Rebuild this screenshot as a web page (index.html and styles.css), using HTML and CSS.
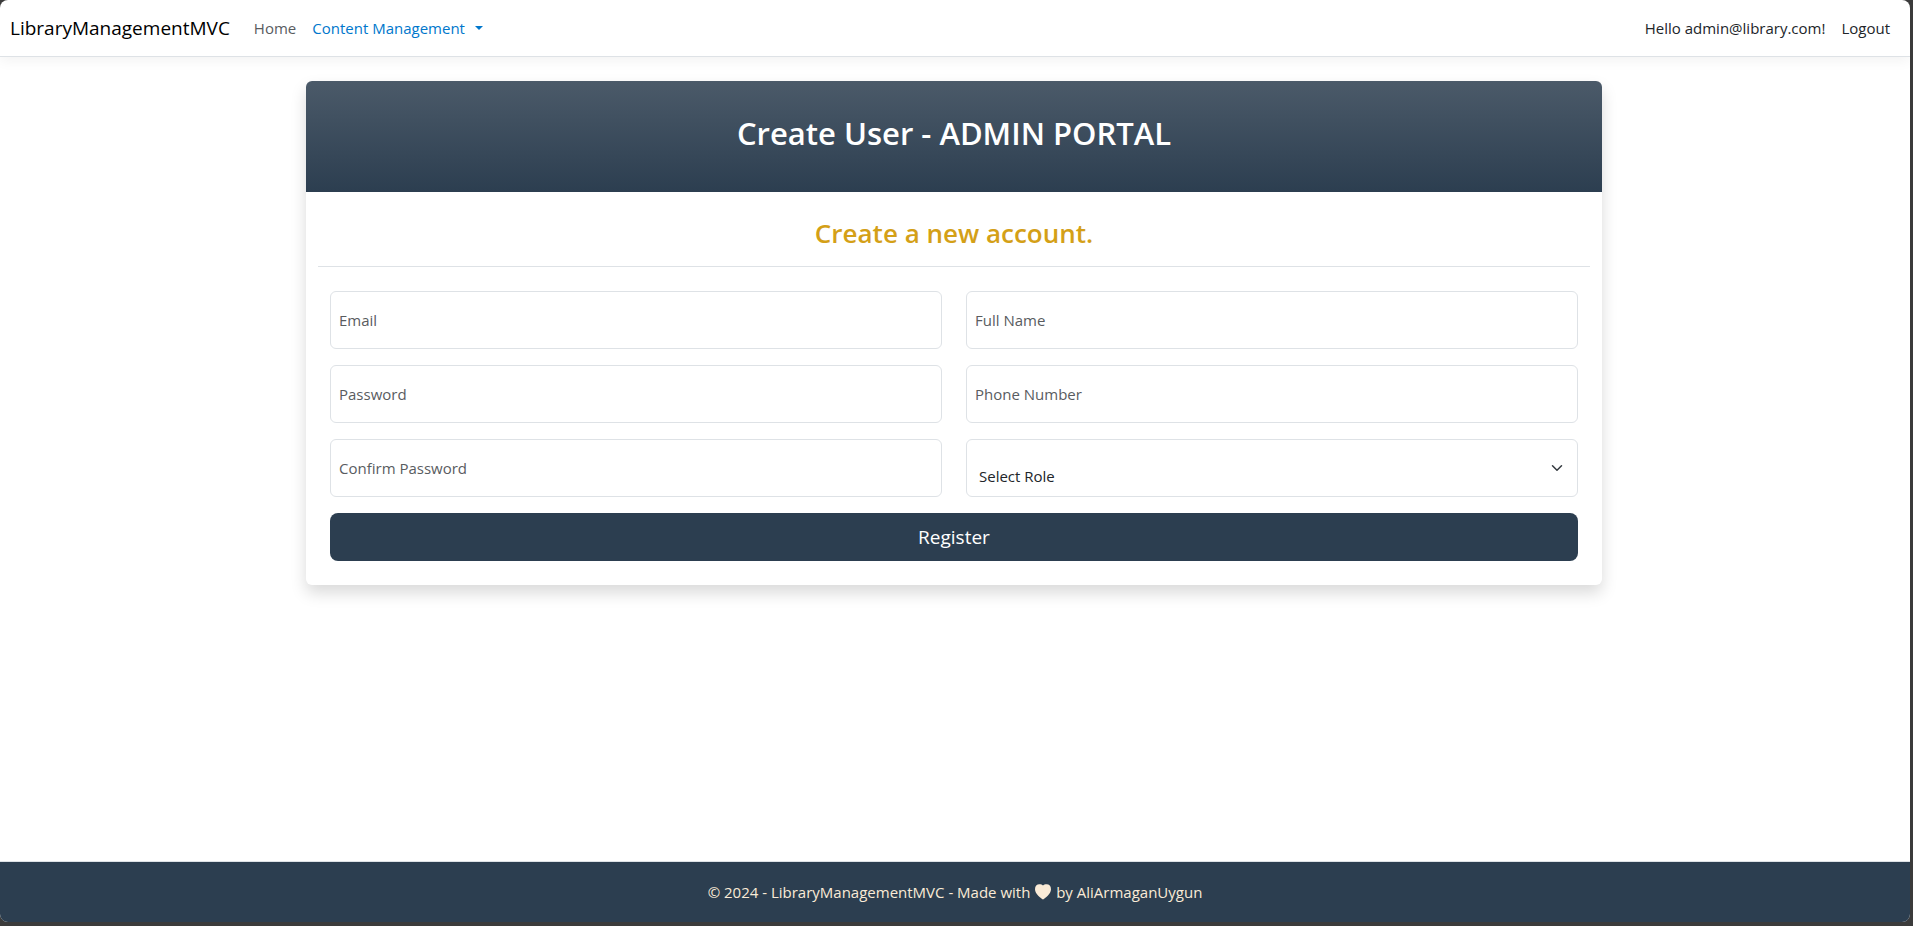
FILE: index.html
```html
<!DOCTYPE html>
<html lang="en">
<head>
<meta charset="utf-8">
<title>Create User - LibraryManagementMVC</title>
<link rel="stylesheet" href="styles.css">
</head>
<body>
<div class="page">
  <header class="navbar">
    <a class="brand" href="#">LibraryManagementMVC</a>
    <nav class="nav">
      <a class="nav-link muted" href="#">Home</a>
      <button class="nav-link dropdown" type="button">Content Management<span class="caret"></span></button>
    </nav>
    <nav class="nav nav-end">
      <a class="nav-link" href="#">Hello admin@library.com!</a>
      <button class="nav-link" type="button">Logout</button>
    </nav>
  </header>

  <main class="main">
    <section class="card">
      <div class="card-header">
        <h1 class="title">Create User - ADMIN PORTAL</h1>
      </div>
      <div class="card-body">
        <h2 class="subtitle">Create a new account.</h2>
        <form class="form">
          <div class="field">
            <input class="control" id="email" type="email">
            <label class="label" for="email">Email</label>
          </div>
          <div class="field">
            <input class="control" id="name" type="text">
            <label class="label" for="name">Full Name</label>
          </div>
          <div class="field">
            <input class="control" id="password" type="password">
            <label class="label" for="password">Password</label>
          </div>
          <div class="field">
            <input class="control" id="phone" type="tel">
            <label class="label" for="phone">Phone Number</label>
          </div>
          <div class="field">
            <input class="control" id="confirm" type="password">
            <label class="label" for="confirm">Confirm Password</label>
          </div>
          <div class="field">
            <select class="control select" id="role" aria-label="Role">
              <option>Select Role</option>
            </select>
            <svg class="chevron" viewBox="0 0 16 16" width="16" height="16" aria-hidden="true"><path d="m2 5 6 6 6-6" fill="none" stroke="#343a40" stroke-width="2" stroke-linecap="round" stroke-linejoin="round"/></svg>
          </div>
          <button class="submit" type="submit">Register</button>
        </form>
      </div>
    </section>
  </main>

  <footer class="footer">
    <p class="footer-text">© 2024 - LibraryManagementMVC - Made with <svg class="heart" viewBox="0 0 16 16" width="16" height="16" role="img" aria-label="love"><path d="M8 15.600C6 14.200 0 10 0 5.200C0 2 1.800 0.200 4.400 0.200C6 0.200 7.300 0.500 8 1.400C8.700 0.500 10 0.200 11.600 0.200C14.200 0.200 16 2 16 5.200C16 10 10 14.200 8 15.600Z" fill="currentColor"/></svg> by AliArmaganUygun</p>
  </footer>
</div>
</body>
</html>
```
FILE: styles.css
```css
* {
  box-sizing: border-box;
}

body {
  margin: 0;
  background: #3b3b3b;
  color: #212529;
  font: 400 15px/24px "Open Sans", "Noto Sans", sans-serif;
}

button,
input,
select {
  font: inherit;
  color: inherit;
}

.page {
  display: flex;
  flex-direction: column;
  min-height: calc(100vh - 4px);
  margin: 0 3px 4px 0;
  overflow: hidden;
  background: #fff;
  border-radius: 8px;
}

.navbar {
  display: flex;
  align-items: center;
  min-height: 57px;
  padding: 0 12px 0 10px;
  border-bottom: 1px solid #dee2e6;
  box-shadow: 0 4px 12px rgba(0, 0, 0, 0.05);
}

.brand {
  margin-right: 16px;
  color: #000;
  font-size: 19px;
  line-height: 30px;
  text-decoration: none;
}

.nav {
  display: flex;
}

.nav-end {
  margin-left: auto;
}

.nav-link {
  display: flex;
  align-items: center;
  padding: 8px;
  border: 0;
  background: none;
  color: #212529;
  text-decoration: none;
}

.muted {
  color: #595c5f;
}

.dropdown {
  color: #0077cc;
}

.caret {
  margin-left: 10px;
  border: 4px solid transparent;
  border-top-color: currentColor;
  border-bottom: 0;
}

.main {
  flex: 1;
  width: 100%;
  max-width: 1320px;
  margin: 0 auto;
  padding: 24px 13px 24px 11px;
}

.card {
  border-radius: 6px;
  background: #fff;
  box-shadow: 0 8px 16px rgba(0, 0, 0, 0.15);
}

.card-header {
  padding: 32px 12px 39px;
  border-radius: 6px 6px 0 0;
  background: linear-gradient(180deg, #4b5a69, #2c3e50);
}

.title {
  margin: 0;
  color: #fff;
  font-size: 31px;
  font-weight: 600;
  line-height: 40px;
  text-align: center;
}

.card-body {
  padding: 24px 12px;
}

.subtitle {
  margin: 0 0 24px;
  padding-bottom: 15px;
  border-bottom: 1px solid #dee2e6;
  color: #d4a017;
  font-size: 26px;
  font-weight: 600;
  line-height: 35px;
  text-align: center;
}

.form {
  display: grid;
  grid-template-columns: 1fr 1fr;
  gap: 16px 24px;
  padding: 0 12px;
}

.field {
  display: grid;
  align-items: center;
}

.control,
.label,
.chevron {
  grid-area: 1 / 1;
}

.control {
  width: 100%;
  height: 58px;
  padding: 0 12px;
  border: 1px solid #dee2e6;
  border-radius: 6px;
  background: #fff;
}

.label {
  justify-self: start;
  padding-left: 9px;
  color: #595c5f;
  pointer-events: none;
}

.select {
  padding: 16px 36px 0 12px;
  appearance: none;
}

.chevron {
  justify-self: end;
  width: 12px;
  height: 12px;
  margin-right: 15px;
  pointer-events: none;
}

.submit {
  grid-column: 1 / -1;
  padding: 8px 16px;
  border: 0;
  border-radius: 8px;
  background: #2c3e50;
  color: #fff;
  font-size: 19px;
  line-height: 32px;
}

.footer {
  padding: 18px 12px;
  border-top: 1px solid #dee2e6;
  background: #2c3e50;
  color: #faebd7;
}

.footer-text {
  margin: 0;
  text-align: center;
}

.heart {
  margin: 0 1px;
  vertical-align: -2px;
}
```
